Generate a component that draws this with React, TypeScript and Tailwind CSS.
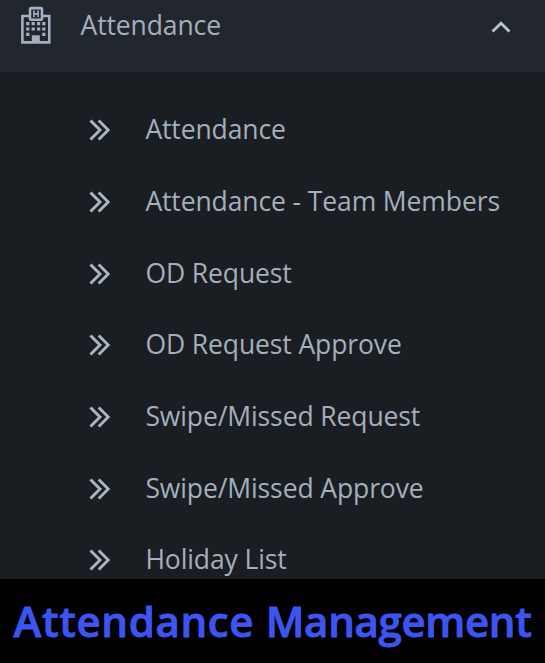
const items = [
  'Attendance',
  'Attendance - Team Members',
  'OD Request',
  'OD Request Approve',
  'Swipe/Missed Request',
  'Swipe/Missed Approve',
  'Holiday List',
]

function HospitalIcon() {
  return (
    <svg width="32" height="38" viewBox="0 0 32 38" fill="none" className="shrink-0">
      <path d="M10 10H2.4V36.4H29.3V10H22" stroke="#a3b0bf" strokeWidth="2.6" />
      <rect x="10" y="2.1" width="12" height="11.6" rx="1.2" stroke="#a3b0bf" strokeWidth="2.6" />
      <path d="M13.9 4.5V11.3M18.1 4.5V11.3M13.9 7.9H18.1" stroke="#a3b0bf" strokeWidth="1.6" />
      <path
        d="M6.2 17.6h3.2M11.6 17.6h3.2M17 17.6h3.2M22.2 17.6h3.2M6.2 23h3.2M11.6 23h3.2M17 23h3.2M22.2 23h3.2M6.2 28.4h3.2M22.2 28.4h3.2"
        stroke="#a3b0bf"
        strokeWidth="3.2"
      />
      <path d="M11.8 29.3h8v7h-8z" fill="#a3b0bf" />
    </svg>
  )
}

function DoubleChevron() {
  return (
    <svg width="22" height="22" viewBox="0 0 22 22" fill="none" className="shrink-0">
      <path d="M1.5 1.5L11 11L1.5 20.5M9.7 1.5L19.2 11L9.7 20.5" stroke="#a9b5c2" strokeWidth="2.9" />
    </svg>
  )
}

export default function App() {
  return (
    <div className="w-[545px] h-[663px] flex flex-col overflow-hidden bg-[#1a1d21] font-['Open_Sans',sans-serif] text-[26.5px] tracking-[-0.11px] text-[#a3afbc]">
      <header className="h-[72px] shrink-0 flex items-start bg-[#22262d] pl-5 pr-[34px] pt-1.5">
        <HospitalIcon />
        <span className="ml-[28.5px] leading-[38px] flex-1">Attendance</span>
        <svg width="20" height="12" viewBox="0 0 20 12" fill="none" className="mt-[15px]">
          <path d="M1.5 10.5L10 2.2L18.5 10.5" stroke="#b8c2cc" strokeWidth="2.9" />
        </svg>
      </header>

      <ul className="h-[507px] shrink-0 overflow-hidden pt-[22.5px]">
        {items.map(label => (
          <li key={label} className="h-[71.7px] flex items-center pl-[89.4px] whitespace-nowrap">
            <DoubleChevron />
            <span className="ml-[34px] mb-0.5 leading-9">{label}</span>
          </li>
        ))}
      </ul>

      <footer className="flex-1 flex items-center justify-center bg-black">
        <h1 className="font-semibold text-[42px] leading-none text-[#3d55f0] [-webkit-text-stroke:0.9px_#3d55f0] whitespace-nowrap">
          <span className="tracking-[0.65px]">Attendance </span>
          <span className="tracking-[-0.35px]">Management</span>
        </h1>
      </footer>
    </div>
  )
}
